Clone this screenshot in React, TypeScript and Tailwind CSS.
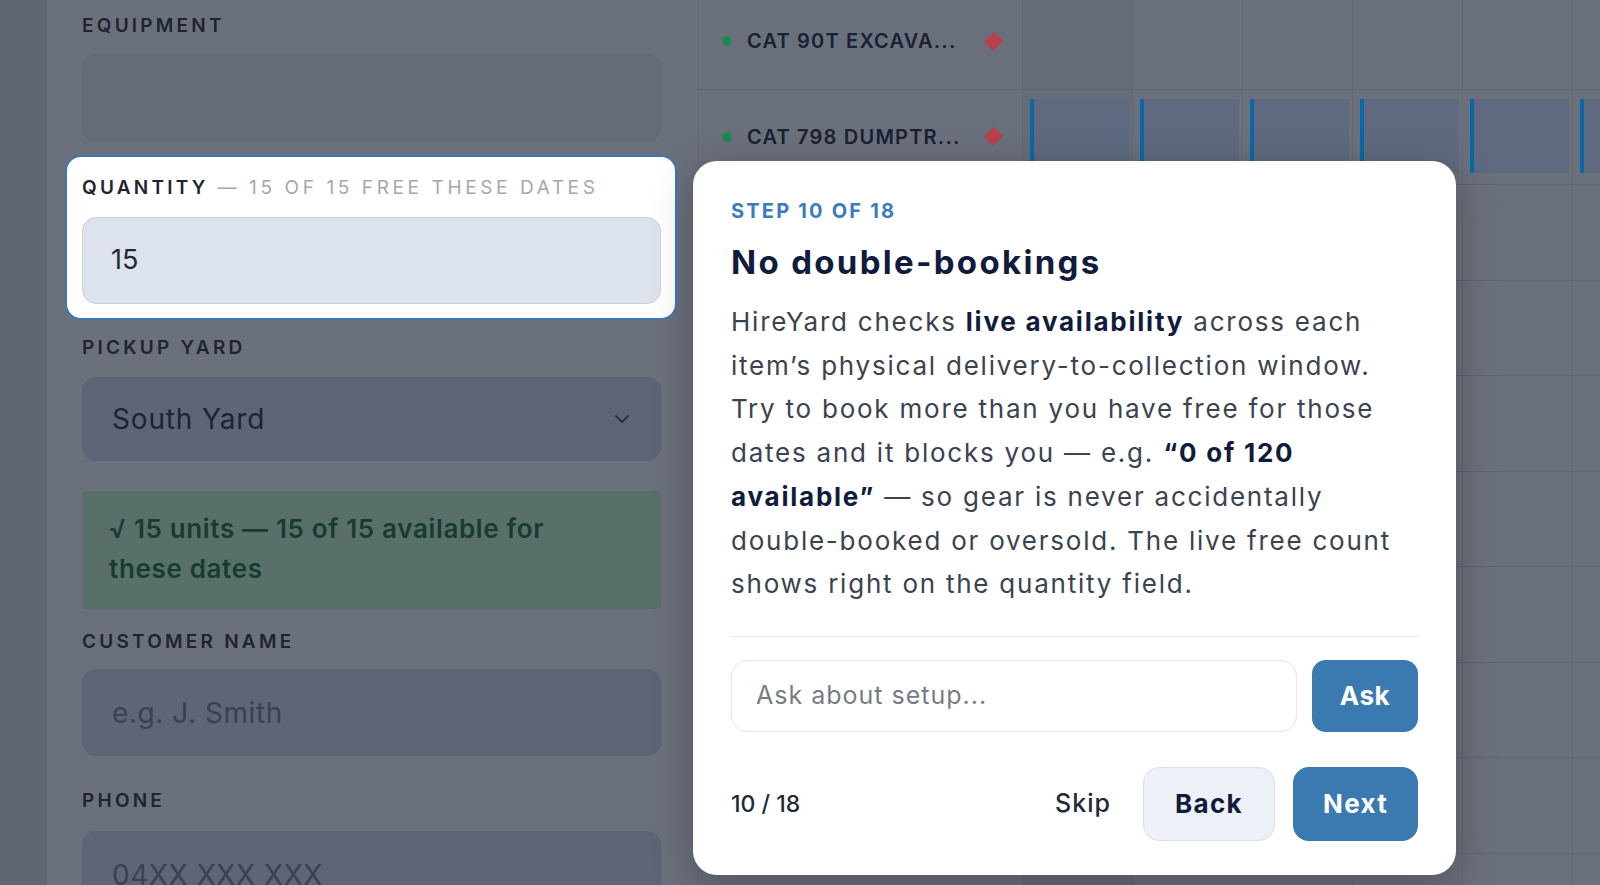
import React from "react";

const cols = [0, 1, 2, 3, 4, 5];
const rows = [0, 1, 2, 3, 4, 5, 6, 7, 8, 9];

function Label({ children }: { children: React.ReactNode }) {
  return (
    <div className="shrink-0 h-[24px] leading-[24px] text-[19px] font-semibold tracking-[0.17em] text-[#1f2431] whitespace-nowrap">
      {children}
    </div>
  );
}

export default function App() {
  return (
    <div className="relative w-[1600px] h-[885px] overflow-hidden flex bg-[#6a707c] font-['Inter',sans-serif]">
      {/* left strip */}
      <div className="w-[47px] shrink-0 bg-[#5f6571]" />

      {/* form panel */}
      <div className="w-[651px] shrink-0 pl-[35px] pr-[37px] pt-[14px] flex flex-col">
        <Label>EQUIPMENT</Label>
        <div className="shrink-0 mt-[16px] h-[88px] rounded-[14px] bg-[#646b79] border border-[#636a78]" />

        {/* highlighted quantity */}
        <div className="shrink-0 relative z-10 mt-[13px] -ml-[17px] -mr-[16px] rounded-[16px] border-2 border-[#3c78b6] bg-white pl-[15px] pr-[14px] pt-[19px] pb-[14px]">
          <div className="h-[24px] leading-[24px] text-[19px] whitespace-nowrap">
            <span className="font-semibold tracking-[0.17em] text-[#1f2431]">QUANTITY</span>
            <span className="text-[#a3a8b0] font-normal tracking-[0.19em]"> — 15 OF 15 FREE THESE DATES</span>
          </div>
          <div className="mt-[17px] h-[87px] rounded-[14px] bg-[#dde3ed] border border-[#c9d1dd] flex items-center pl-[28px] text-[27px] text-[#1f2937]">
            15
          </div>
        </div>

        <div className="shrink-0 mt-[16px]">
          <Label>PICKUP YARD</Label>
        </div>
        <div className="shrink-0 mt-[17px] h-[84px] rounded-[14px] bg-[#5d6577] border border-[#5b6374] flex items-center justify-between pl-[29px] pr-[30px]">
          <span className="text-[28px] tracking-[0.03em] text-[#1e2433]">South Yard</span>
          <svg width="16" height="10" viewBox="0 0 16 10" fill="none">
            <path d="M2 2l6 6 6-6" stroke="#2a3142" strokeWidth="1.8" strokeLinecap="round" strokeLinejoin="round" />
          </svg>
        </div>

        <div className="shrink-0 mt-[30px] h-[118px] rounded-[4px] bg-[#59706a] pl-[27px] pr-[20px] pt-[18px] text-[26px] leading-[40px] font-semibold tracking-[0.025em] text-[#173c2e] whitespace-nowrap">
          √ 15 units — 15 of 15 available for
          <br />
          these dates
        </div>

        <div className="shrink-0 mt-[21px]">
          <Label>CUSTOMER NAME</Label>
        </div>
        <div className="shrink-0 mt-[15px] h-[87px] rounded-[14px] bg-[#5d6577] border border-[#5b6374] flex items-center pl-[29px] text-[28px] tracking-[0.02em] text-[#3a4150]">
          e.g. J. Smith
        </div>

        <div className="shrink-0 mt-[33px]">
          <Label>PHONE</Label>
        </div>
        <div className="shrink-0 mt-[18px] h-[87px] rounded-[14px] bg-[#5d6577] border border-[#5b6374] flex items-center pl-[29px] text-[28px] tracking-[0.02em] text-[#3a4150]">
          04XX XXX XXX
        </div>
      </div>

      {/* schedule */}
      <div className="flex-1 border-l border-[#626875] -mt-[6px] flex flex-col">
        {rows.map((r) => (
          <div key={r} className="h-[95.5px] shrink-0 flex border-b border-[#5f6572]">
            <div className="w-[324px] shrink-0 flex items-center pl-[23px] border-r border-[#616774]">
              {r < 2 && (
                <>
                  <span className="w-[10px] h-[10px] rounded-full bg-[#1c8a4f]" />
                  <span className="ml-[15px] w-[214px] whitespace-nowrap text-[20px] font-semibold tracking-[0.06em] text-[#1b2032]">
                    {r === 0 ? "CAT 90T EXCAVA..." : "CAT 798 DUMPTR..."}
                  </span>
                  <span className="ml-[26px] w-[13px] h-[13px] rotate-45 scale-y-110 bg-[#b8414b]" />
                </>
              )}
            </div>
            {cols.map((c) => (
              <div
                key={c}
                className={`w-[110px] shrink-0 border-r border-[#636976] ${c === 0 ? "bg-[#666c7a]" : ""} ${r === 1 ? "pl-[7px] pr-[3px] pt-[9px] pb-[11px]" : ""}`}
              >
                {r === 1 && <div className="h-full bg-[#5f6a80] border-l-4 border-[#0b68a6]" />}
              </div>
            ))}
          </div>
        ))}
      </div>

      {/* tooltip card */}
      <div className="absolute left-[693px] top-[161px] w-[763px] h-[714px] rounded-[24px] bg-white shadow-[0_10px_40px_rgba(0,0,0,0.25)] px-[38px] pt-[38px] z-20">
        <div className="h-[24px] leading-[24px] text-[20px] font-bold tracking-[0.11em] text-[#3a7cbd]">
          STEP 10 OF 18
        </div>
        <div className="mt-[19px] h-[40px] leading-[40px] text-[33px] font-bold text-[#111c3d] tracking-[0.07em] whitespace-nowrap">
          No double-bookings
        </div>
        <div className="mt-[18px] text-[26px] leading-[43.7px] tracking-[0.068em] text-[#3b4250] whitespace-nowrap">
          HireYard checks <b className="font-bold text-[#111c3d]">live availability</b> across each
          <br />
          item’s physical delivery-to-collection window.
          <br />
          Try to book more than you have free for those
          <br />
          dates and it blocks you — e.g. <b className="font-bold text-[#111c3d]">“0 of 120</b>
          <br />
          <b className="font-bold text-[#111c3d]">available”</b> — so gear is never accidentally
          <br />
          double-booked or oversold. The live free count
          <br />
          shows right on the quantity field.
        </div>
        <div className="mt-[30px] border-t border-[#e5e7eb]" />
        <div className="mt-[23px] flex gap-[15px] h-[72px]">
          <div className="flex-1 rounded-[16px] border border-[#e3e6ea] flex items-center pl-[24px] text-[25px] tracking-[0.04em] text-[#777c85]">
            Ask about setup...
          </div>
          <div className="w-[106px] rounded-[14px] bg-[#3b79b1] flex items-center justify-center text-[26px] font-bold tracking-[0.02em] text-white">
            Ask
          </div>
        </div>
        <div className="mt-[35px] flex items-center h-[74px]">
          <span className="text-[23px] font-medium text-[#1f2937]">10 / 18</span>
          <span className="ml-auto text-[25px] font-medium tracking-[0.04em] text-[#1f2937]">Skip</span>
          <div className="ml-[32px] w-[132px] h-full rounded-[16px] bg-[#edf1f7] border border-[#d8dfe9] flex items-center justify-center text-[26px] font-bold tracking-[0.05em] text-[#111c3d]">
            Back
          </div>
          <div className="ml-[18px] w-[125px] h-full rounded-[16px] bg-[#3b79b1] flex items-center justify-center text-[26px] font-bold tracking-[0.05em] text-white">
            Next
          </div>
        </div>
      </div>
    </div>
  );
}
